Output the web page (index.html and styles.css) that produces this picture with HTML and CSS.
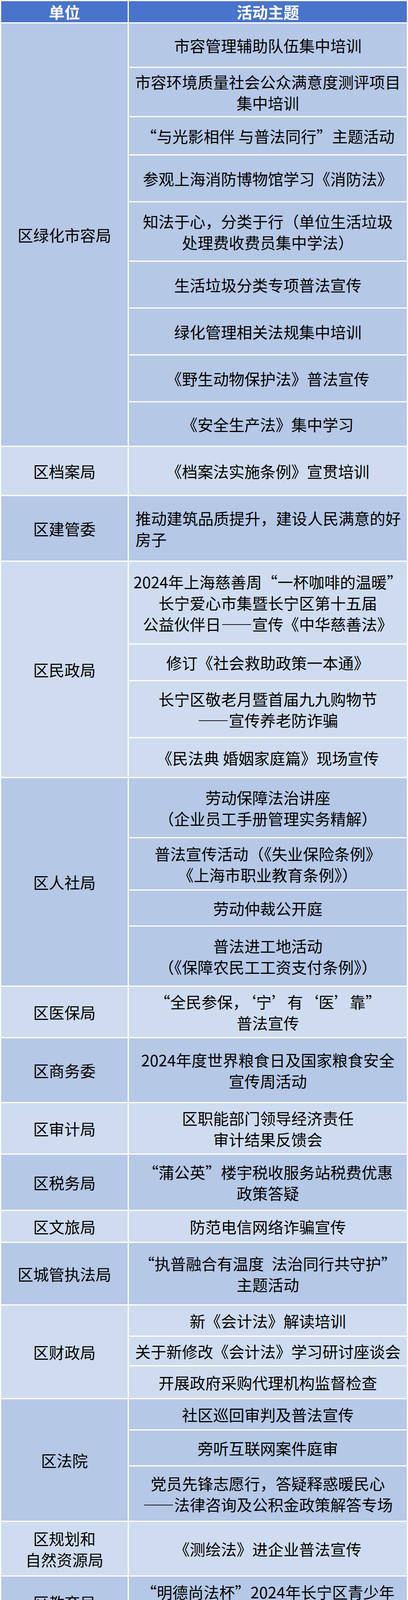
FILE: index.html
```html
<!DOCTYPE html>
<html lang="zh-CN">
<head>
<meta charset="utf-8">
<title>普法活动</title>
<link rel="stylesheet" href="styles.css">
</head>
<body>
<table class="sheet">
  <colgroup><col class="c-unit"><col class="c-topic"></colgroup>
  <thead>
    <tr class="head"><th class="h54">单位</th><th>活动主题</th></tr>
  </thead>
  <tbody>
    <tr class="dark"><td class="unit" rowspan="9">区绿化市容局</td><td class="h111">市容管理辅助队伍集中培训</td></tr>
    <tr class="dark"><td class="h123">市容环境质量社会公众满意度测评项目<br>集中培训</td></tr>
    <tr class="dark"><td class="h95">“与光影相伴 与普法同行”主题活动</td></tr>
    <tr class="dark"><td class="h117">参观上海消防博物馆学习《消防法》</td></tr>
    <tr class="dark"><td class="h149">知法于心，分类于行（单位生活垃圾<br>处理费收费员集中学法）</td></tr>
    <tr class="dark"><td class="h117">生活垃圾分类专项普法宣传</td></tr>
    <tr class="dark"><td class="h117">绿化管理相关法规集中培训</td></tr>
    <tr class="dark"><td class="h117">《野生动物保护法》普法宣传</td></tr>
    <tr class="dark"><td class="h111">《安全生产法》集中学习</td></tr>

    <tr class="light"><td class="unit">区档案局</td><td class="h123">《档案法实施条例》宣贯培训</td></tr>

    <tr class="dark"><td class="unit">区建管委</td><td class="h165 left">推动建筑品质提升，建设人民满意的好<br>房子</td></tr>

    <tr class="light"><td class="unit" rowspan="4">区民政局</td><td class="h209">2024年上海慈善周“一杯咖啡的温暖”<br>长宁爱心市集暨长宁区第十五届<br>公益伙伴日——宣传《中华慈善法》</td></tr>
    <tr class="light"><td class="h91">修订《社会救助政策一本通》</td></tr>
    <tr class="light"><td class="h143">长宁区敬老月暨首届九九购物节<br>——宣传养老防诈骗</td></tr>
    <tr class="light"><td class="h99">《民法典 婚姻家庭篇》现场宣传</td></tr>

    <tr class="dark"><td class="unit" rowspan="4">区人社局</td><td class="h151">劳动保障法治讲座<br>（企业员工手册管理实务精解）</td></tr>
    <tr class="dark"><td class="h131">普法宣传活动（《失业保险条例》<br>《上海市职业教育条例》）</td></tr>
    <tr class="dark"><td class="h89">劳动仲裁公开庭</td></tr>
    <tr class="dark"><td class="h151">普法进工地活动<br>（《保障农民工工资支付条例》）</td></tr>

    <tr class="light"><td class="unit">区医保局</td><td class="h129">“全民参保，‘宁’有‘医’靠”<br>普法宣传</td></tr>

    <tr class="dark"><td class="unit">区商务委</td><td class="h163">2024年度世界粮食日及国家粮食安全<br>宣传周活动</td></tr>

    <tr class="light"><td class="unit">区审计局</td><td class="h129">区职能部门领导经济责任<br>审计结果反馈会</td></tr>

    <tr class="dark"><td class="unit">区税务局</td><td class="h141">“蒲公英”楼宇税收服务站税费优惠<br>政策答疑</td></tr>

    <tr class="light"><td class="unit">区文旅局</td><td class="h79">防范电信网络诈骗宣传</td></tr>

    <tr class="dark"><td class="unit">区城管执法局</td><td class="h157">“执普融合有温度&ensp;法治同行共守护”<br>主题活动</td></tr>

    <tr class="light"><td class="unit" rowspan="3">区财政局</td><td class="h77">新《会计法》解读培训</td></tr>
    <tr class="light"><td class="h73">关于新修改《会计法》学习研讨座谈会</td></tr>
    <tr class="light"><td class="h81">开展政府采购代理机构监督检查</td></tr>

    <tr class="dark"><td class="unit" rowspan="3">区法院</td><td class="h77">社区巡回审判及普法宣传</td></tr>
    <tr class="dark"><td class="h89">旁听互联网案件庭审</td></tr>
    <tr class="dark"><td class="h139">党员先锋志愿行，答疑释惑暖民心<br>——法律咨询及公积金政策解答专场</td></tr>

    <tr class="light"><td class="unit">区规划和<br>自然资源局</td><td class="h137">《测绘法》进企业普法宣传</td></tr>

    <tr class="dark"><td class="unit">区教育局</td><td class="h131">“明德尚法杯”2024年长宁区青少年<br>法治教育优秀教案征集活动</td></tr>

    <tr class="light"><td class="unit" rowspan="2">区生态环境局</td><td class="h85">普法进社区专场活动</td></tr>
    <tr class="light"><td class="h81">普法进楼宇专场活动</td></tr>

    <tr class="dark"><td class="unit" rowspan="2">区体育局</td><td class="h89">《体育法》宣传</td></tr>
    <tr class="dark"><td class="h135">《体育法》普法专题讲座<br>（面向职工、市民）</td></tr>

    <tr class="light"><td class="unit">区妇联</td><td class="h149">三级妇联干部培训《未成年人保护法》<br>实地参观讲解</td></tr>

    <tr class="dark"><td class="unit">周家桥街道</td><td class="h95">民法典进机关普法宣传</td></tr>

    <tr class="light"><td class="unit">华阳路街道</td><td class="h95">涉企法治宣传专场活动</td></tr>

    <tr class="dark"><td class="unit">程家桥街道</td><td class="h85">城管进学校——上好普法宣传第一课</td></tr>

    <tr class="light"><td class="unit" rowspan="2">江苏路街道</td><td class="h97">行政诉讼案件审理旁听</td></tr>
    <tr class="light"><td class="h99">行政复议常识宣讲</td></tr>

    <tr class="dark"><td class="unit">新泾镇</td><td class="h85">社区常见违法行为普法</td></tr>
  </tbody>
</table>
</body>
</html>
```

FILE: styles.css
```css
html, body {
  margin: 0;
  padding: 0;
  background: #ffffff;
}

.sheet {
  width: 1045px;
  border-collapse: separate;
  border-spacing: 3px;
  table-layout: fixed;
  font-family: "Noto Sans CJK SC", "Noto Sans", "DejaVu Sans", sans-serif;
  font-size: 40px;
  line-height: 54px;
  color: #000000;
}

.c-unit { width: 324px; }
.c-topic { width: 712px; }

.sheet th,
.sheet td {
  padding: 0 12px;
  text-align: center;
  vertical-align: middle;
  white-space: nowrap;
}

.head th {
  background: #4874cb;
  color: #ffffff;
  font-weight: 700;
}

.dark td { background: #b5c8e6; }
.light td { background: #cfdcef; }

.sheet td.left {
  text-align: left;
  padding-left: 17px;
}

.h54 { height: 54px; }
.h73 { height: 73px; }
.h77 { height: 77px; }
.h79 { height: 79px; }
.h81 { height: 81px; }
.h85 { height: 85px; }
.h89 { height: 89px; }
.h91 { height: 91px; }
.h95 { height: 95px; }
.h97 { height: 97px; }
.h99 { height: 99px; }
.h111 { height: 111px; }
.h117 { height: 117px; }
.h123 { height: 123px; }
.h129 { height: 129px; }
.h131 { height: 131px; }
.h135 { height: 135px; }
.h137 { height: 137px; }
.h139 { height: 139px; }
.h141 { height: 141px; }
.h143 { height: 143px; }
.h149 { height: 149px; }
.h151 { height: 151px; }
.h157 { height: 157px; }
.h163 { height: 163px; }
.h165 { height: 165px; }
.h209 { height: 209px; }
```
